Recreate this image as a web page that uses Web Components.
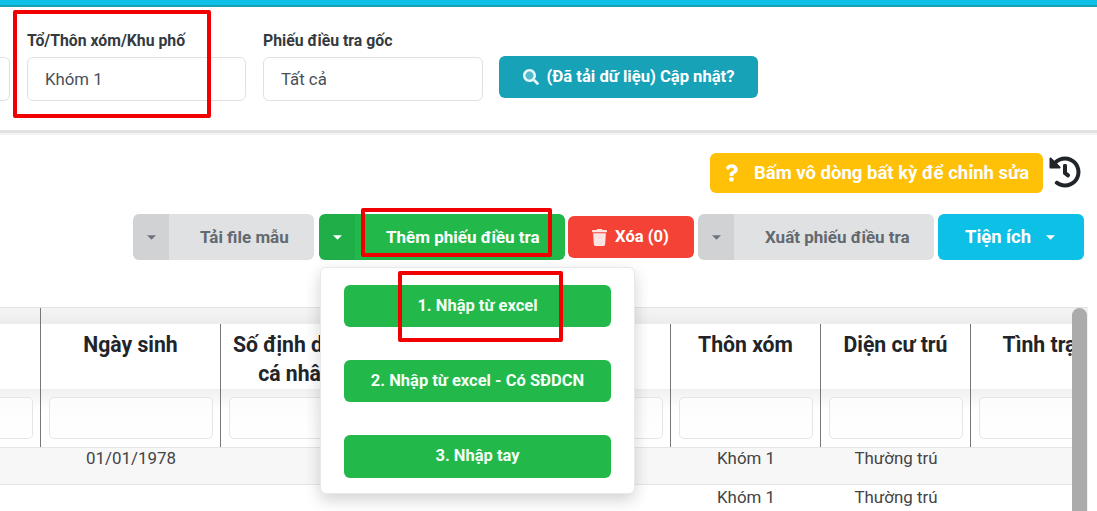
<!DOCTYPE html>
<html lang="vi"><head><meta charset="utf-8"><title>Phiếu điều tra</title>
<style>
html,body{margin:0;padding:0;background:#fff}
body{width:1097px;height:511px;overflow:hidden;position:relative;font-family:Roboto,"Noto Sans",sans-serif;color:#212529}
</style></head><body>
<app-topbar></app-topbar>
<filter-panel>
  <form-field stub></form-field>
  <form-field label="Tổ/Thôn xóm/Khu phố" value="Khóm 1" w="219"></form-field>
  <form-field label="Phiếu điều tra gốc" value="Tất cả" w="220"></form-field>
  <update-button>(Đã tải dữ liệu) Cập nhật?</update-button>
</filter-panel>
<panel-divider></panel-divider>
<action-toolbar>
  <hint-row slot="hint">Bấm vô dòng bất kỳ để chỉnh sửa</hint-row>
  <split-button tone="gray" w="181">Tải file mẫu</split-button>
  <split-button tone="green" w="246" style="margin-left:1px">Thêm phiếu điều tra</split-button>
  <delete-button style="margin-left:-1px">Xóa (0)</delete-button>
  <split-button tone="gray" w="236">Xuất phiếu điều tra</split-button>
  <utility-button>Tiện ích</utility-button>
</action-toolbar>
<data-table></data-table>
<add-menu>
  <menu-item h="42">1. Nhập từ excel</menu-item>
  <menu-item h="42">2. Nhập từ excel - Có SĐDCN</menu-item>
  <menu-item h="43">3. Nhập tay</menu-item>
</add-menu>
<red-mark x="13" y="10" w="198" h="108"></red-mark>
<red-mark x="361" y="208" w="191" h="49"></red-mark>
<red-mark x="398" y="271" w="165" h="71"></red-mark>
<script>
const def=(name,html,init)=>customElements.define(name,class extends HTMLElement{
  constructor(){super();this.attachShadow({mode:'open'}).innerHTML=typeof html==='function'?html(this):html;}
  connectedCallback(){if(init)init(this,this.shadowRoot);}
});
const caret=(c)=>`<svg width="9" height="5" viewBox="0 0 10 5" aria-hidden="true"><path d="M0 0h10L5 5z" fill="${c}"/></svg>`;

def('app-topbar',`<style>:host{display:block;height:7px;background:#0dc0e6;border-bottom:2px solid #17a2b8;box-sizing:border-box}</style>`);

def('filter-panel',`<style>:host{display:flex;height:123px;box-sizing:border-box;gap:17px;padding-top:26px;background:#fff}</style><slot></slot>`);

def('form-field',`<style>
:host{display:flex;flex-direction:column;flex:none}
label{font:700 15.8px/16px Roboto,sans-serif;color:#343a40;height:24px;white-space:nowrap;display:block}
.box{height:44px;box-sizing:border-box;border:1px solid #dee2e6;border-radius:6px;background:#fff;font:400 16.8px/42px Roboto,sans-serif;color:#495057;padding-left:17px}
:host([stub]) .box{padding:0;border-left:0;border-radius:0 6px 6px 0}
</style><label></label><div class="box"></div>`,(h,s)=>{
  h.style.width=(h.hasAttribute('stub')?10:+h.getAttribute('w'))+'px';
  s.querySelector('label').textContent=h.getAttribute('label')||'';
  s.querySelector('.box').textContent=h.getAttribute('value')||'';
});

def('update-button',`<style>
:host{display:flex;align-items:center;justify-content:center;gap:8px;width:259px;height:42px;margin:23px 0 0 -1px;box-sizing:border-box;background:#17a2b8;border-radius:6px;color:#fff;font:700 16.6px/1 Roboto,sans-serif;white-space:nowrap;flex:none}
svg{width:16px;height:16px}
</style><svg viewBox="0 0 512 512"><circle cx="208" cy="208" r="130" fill="#fff" opacity=".25"/><path fill="#e6f6f9" d="M505 442.7L405.3 343c-4.5-4.5-10.6-7-17-7H372c27.6-35.3 44-79.7 44-128C416 93.1 322.9 0 208 0S0 93.1 0 208s93.1 208 208 208c48.3 0 92.7-16.4 128-44v16.3c0 6.4 2.5 12.5 7 17l99.7 99.7c9.4 9.4 24.6 9.4 33.9 0l28.3-28.3c9.4-9.4 9.4-24.6.1-34zM208 336c-70.7 0-128-57.2-128-128 0-70.7 57.2-128 128-128 70.7 0 128 57.2 128 128 0 70.7-57.2 128-128 128z"/></svg><span><slot></slot></span>`);

def('panel-divider',`<style>:host{display:block;height:5px;box-sizing:border-box;background:#f4f4f4;border-top:3px solid #e2e2e2}</style>`);

def('action-toolbar',`<style>
:host{display:block;height:172px;box-sizing:border-box;padding-top:18px;background:#fff}
.row{display:flex;align-items:center;gap:4px;margin:21px 0 0 133px;height:46px}
</style><slot name="hint"></slot><div class="row"><slot></slot></div>`);

def('hint-row',`<style>
:host{display:flex;align-items:center;height:40px;margin-left:710px}
.b{width:333px;height:40px;background:#ffc107;border-radius:6px;color:#fff;display:flex;align-items:center;gap:16px;padding-left:15px;box-sizing:border-box;font:700 18.5px/1 Roboto,sans-serif;white-space:nowrap}
.q{width:13px;height:18px;flex:none}
.h{width:32px;height:32px;margin:-2px 0 0 6px;flex:none}
</style><div class="b"><svg class="q" viewBox="0 0 384 512"><path fill="#fff" d="M202.021 0C122.202 0 70.503 32.703 29.914 91.026c-7.363 10.58-5.093 25.086 5.178 32.874l43.138 32.709c10.373 7.865 25.132 6.026 33.253-4.148 25.049-31.381 43.63-49.449 82.757-49.449 30.764 0 68.816 19.799 68.816 49.631 0 22.552-18.617 34.134-48.993 51.164-35.423 19.86-82.299 44.576-82.299 106.405V320c0 13.255 10.745 24 24 24h72.471c13.255 0 24-10.745 24-24v-5.773c0-42.86 125.268-44.645 125.268-160.627C377.504 66.256 286.902 0 202.021 0zM192 373.459c-38.196 0-69.271 31.075-69.271 69.271 0 38.195 31.075 69.27 69.271 69.27s69.271-31.075 69.271-69.271-31.075-69.27-69.271-69.27z"/></svg><span><slot></slot></span></div><svg class="h" viewBox="0 0 512 512"><path fill="#212529" d="M504 255.531c.253 136.64-111.18 248.372-247.82 248.468-59.015.042-113.223-20.53-155.822-54.911-11.077-8.94-11.905-25.541-1.839-35.607l11.267-11.267c8.609-8.609 22.353-9.551 31.891-1.984C173.062 425.135 212.781 440 256 440c101.705 0 184-82.311 184-184 0-101.705-82.311-184-184-184-48.814 0-93.149 18.969-126.068 49.932l50.754 50.754c10.08 10.08 2.941 27.314-11.313 27.314H24c-8.837 0-16-7.163-16-16V38.627c0-14.254 17.234-21.393 27.314-11.314l49.372 49.372C129.209 34.136 189.552 8 256 8c136.81 0 247.747 110.78 248 247.531zm-180.912 78.784l9.823-12.63c8.138-10.463 6.253-25.542-4.21-33.679L288 256.349V152c0-13.255-10.745-24-24-24h-16c-13.255 0-24 10.745-24 24v135.651l65.409 50.874c10.463 8.137 25.541 6.253 33.679-4.21z"/></svg>`);

def('split-button',(h)=>{
  const g=h.getAttribute('tone')==='gray';
  return `<style>
:host{display:flex;height:46px;border-radius:6px;overflow:hidden;flex:none;box-sizing:border-box;font:700 17px/1 Roboto,sans-serif;white-space:nowrap}
.c{width:36px;flex:none;display:flex;align-items:center;justify-content:center;box-sizing:border-box}
.m{flex:1;display:flex;align-items:center;box-sizing:border-box;padding-left:31px}
</style><div class="c" style="background:${g?'#d0d2d4':'#20ae48'}">${caret(g?'#6c757d':'#fff')}</div><div class="m" style="background:${g?'#dfe1e3':'#22b84a'};color:${g?'#63696f':'#fff'}"><span><slot></slot></span></div>`;
},(h,s)=>{
  h.style.width=h.getAttribute('w')+'px';
});

def('delete-button',`<style>
:host{display:flex;align-items:center;justify-content:center;gap:8px;width:126px;height:42px;background:#f44336;border-radius:6px;color:#fff;font:700 16.6px/1 Roboto,sans-serif;flex:none;white-space:nowrap;box-sizing:border-box;padding-right:1px}
svg{width:15px;height:17px}
</style><svg viewBox="0 0 448 512"><path fill="#ffe3e0" d="M432 32H312l-9.4-18.7A24 24 0 0 0 281.1 0H166.8a23.72 23.72 0 0 0-21.4 13.3L136 32H16A16 16 0 0 0 0 48v32a16 16 0 0 0 16 16h416a16 16 0 0 0 16-16V48a16 16 0 0 0-16-16zM53.2 467a48 48 0 0 0 47.9 45h245.8a48 48 0 0 0 47.9-45L416 128H32z"/></svg><span><slot></slot></span>`);

def('utility-button',`<style>
:host{display:flex;align-items:center;justify-content:center;gap:15px;width:146px;height:46px;background:#0dc0e6;border-radius:6px;color:#fff;font:700 18.4px/1 Roboto,sans-serif;flex:none;white-space:nowrap;box-sizing:border-box;padding-right:2px}
</style><span><slot></slot></span>${caret('#fff')}`);

const cols=[41,180,150,300,150,150,162];
const tracks=cols.map(c=>c+'px').join(' ');
const head=['','Ngày sinh','Số định danh<br>cá nhân','','Thôn xóm','Diện cư trú','Tình trạng'];
const r1=['','01/01/1978','','','Khóm 1','Thường trú',''];
const r2=['','','','','Khóm 1','Thường trú',''];
const cellRow=(cl,vals)=>vals.map(v=>`<div class="${cl}">${v}</div>`).join('');
def('data-table',`<style>
:host{display:block;position:relative;height:204px;overflow:hidden;box-sizing:border-box;width:1088px;border-top:1px solid #e3e3e3;font-family:Roboto,sans-serif}
.band{height:16px;background:linear-gradient(#f5f5f5,#ececec)}
.band i{display:block;width:41px;height:16px;box-sizing:border-box;border-right:1px solid #777}
.g{display:grid;grid-template-columns:${tracks}}
.h{height:65px;background:#fff;font:700 21.2px/29px Roboto,sans-serif;color:#212529;text-align:center;padding-top:6px;box-sizing:border-box;white-space:nowrap;display:flex;justify-content:center;border-right:1px solid #777}
.f{height:58px;box-sizing:border-box;background:linear-gradient(#f0f0f0,#fff 22px);border-right:1px solid #777;padding:8px 7px 0 8px}
.f i{display:block;height:42px;box-sizing:border-box;border:1px solid #e5e5e5;border-radius:5px;background:linear-gradient(#fcfcfc,#fff)}
.f.first{padding-left:0}.f.first i{border-left:0;border-radius:0 5px 5px 0}
.r{height:38px;box-sizing:border-box;background:#f7f7f7;border-top:1px solid #e6e6e6;border-bottom:1px solid #e6e6e6;font:400 16.9px/20px Roboto,sans-serif;color:#444;text-align:center}
.r2{height:39px;box-sizing:border-box;background:#fff;border-bottom:1px solid #e6e6e6;font:400 16.9px/24px Roboto,sans-serif;color:#444;text-align:center}
.track{position:absolute;right:0;top:0;bottom:0;width:16px;background:#f1f1f1}
.thumb{position:absolute;left:0;top:0;width:15px;height:400px;background:#ababab;border-radius:8px 8px 0 0}
</style><div class="band"><i></i></div>
<div class="g">${cellRow('h',head)}${cols.map((_,i)=>`<div class="f${i?'':' first'}"><i></i></div>`).join('')}${cellRow('r',r1)}${cellRow('r2',r2)}</div>
<div class="track"><div class="thumb"></div></div>`);

def('add-menu',`<style>
:host{position:absolute;left:320px;top:267px;width:315px;height:227px;box-sizing:border-box;background:#fff;border:1px solid #e9e9e9;border-radius:6px;box-shadow:0 6px 16px rgba(0,0,0,.18);padding:17px 23px 0 23px;display:flex;flex-direction:column;gap:33px}
</style><slot></slot>`);
def('menu-item',`<style>
:host{display:flex;align-items:center;justify-content:center;background:#22b84a;border-radius:6px;color:#f4fff7;font:700 16.5px/1 Roboto,sans-serif;white-space:nowrap;flex:none}
</style><span><slot></slot></span>`,(h)=>{h.style.height=h.getAttribute('h')+'px';});

def('red-mark',`<style>:host{position:absolute;box-sizing:border-box;border:4px solid #f00000;border-radius:2px;pointer-events:none}</style>`,(h)=>{
  h.style.left=h.getAttribute('x')+'px';h.style.top=h.getAttribute('y')+'px';
  h.style.width=h.getAttribute('w')+'px';h.style.height=h.getAttribute('h')+'px';
});
</script>
</body></html>
